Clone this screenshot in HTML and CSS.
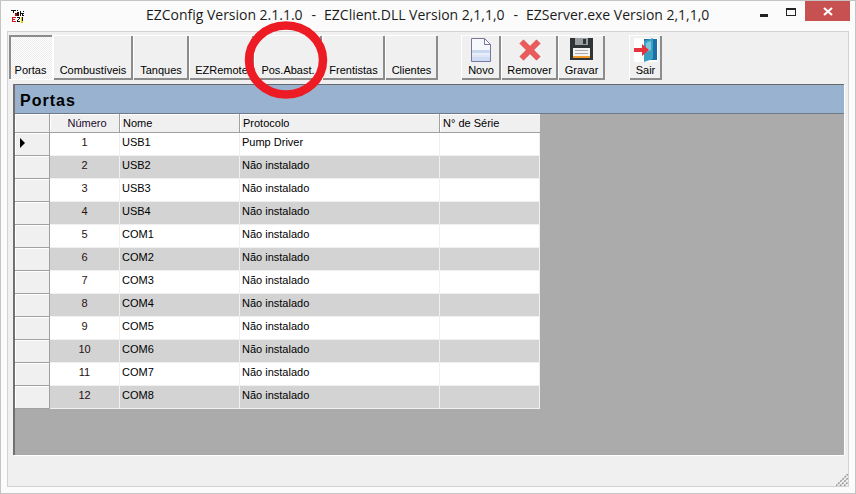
FILE: index.html
```html
<!DOCTYPE html>
<html lang="pt">
<head>
<meta charset="utf-8">
<title>EZConfig</title>
<link rel="stylesheet" href="styles.css">
</head>
<body>
<div class="window">
  <header class="titlebar">
    <svg class="app-icon" width="16" height="16" viewBox="0 0 16 16" shape-rendering="crispEdges">
      <path fill="#111" d="M1 2h5v1H4v2H3V3H1zM7 2h1v1H7zM7 4h2v4H7zM10 3h1v2h2V3h1v1h-1v1h1v1h-1v1h1v1h-2V6h-1v2h-1z"/>
      <path fill="#c00000" d="M5 5h2v3H5z"/>
      <path fill="#e01010" d="M2 9h4v1H3v1h2v1H3v1h3v1H2z"/>
      <path fill="#111" d="M7 9h3v1L8 13h2v1H7v-1l2-3H7z"/>
      <path fill="#e8d000" d="M11 9h2v6h-2z"/>
      <path fill="#111" d="M12 9h1v4h-1z"/>
    </svg>
    <h1 class="title">EZConfig Version 2.1.1.0<span class="sep">-</span>EZClient.DLL Version 2,1,1,0<span class="sep">-</span>EZServer.exe Version 2,1,1,0</h1>
    <div class="controls">
      <span class="ctl-min"></span>
      <span class="ctl-max"></span>
      <span class="ctl-close">
        <svg width="10" height="9" viewBox="0 0 10 9"><path d="M1 1l8 7M9 1L1 8" stroke="#fff" stroke-width="2.2" fill="none"/></svg>
      </span>
    </div>
  </header>

  <main class="client">
    <nav class="toolbar">
      <div class="group">
        <button class="tool tab active w-portas">Portas</button>
        <button class="tool tab w-comb">Combustíveis</button>
        <button class="tool tab w-tanq">Tanques</button>
        <button class="tool tab w-ezr">EZRemote</button>
        <button class="tool tab w-pos">Pos.Abast.</button>
        <button class="tool tab w-fren">Frentistas</button>
        <button class="tool tab w-cli">Clientes</button>
      </div>
      <div class="group actions">
        <button class="tool w-novo">
          <svg class="ico-novo" width="20" height="24" viewBox="0 0 20 24"><path d="M.5.500h13l6 6v17H.5z" fill="#dde6f6" stroke="#76769f"/><path d="M1 1h12v6h6v6H1z" fill="#f5f8fd"/><path d="M13.500.500v6h6z" fill="#fff" stroke="#76769f"/><path d="M1 12h18v3H1z" fill="#c9d8ef"/><path d="M1 15h18v2H1z" fill="#e9eff9"/><path d="M1 19h18v4H1z" fill="#d0dcf3"/></svg>
          Novo
        </button>
        <button class="tool w-rem">
          <svg class="ico-rem" width="22" height="22" viewBox="0 0 22 22"><path d="M4.500.800L11 7.300 17.500.800l3.700 3.700L14.700 11l6.500 6.500-3.700 3.700L11 14.700l-6.500 6.500-3.700-3.700L7.300 11 .8 4.500z" fill="#ec5b5b" stroke="#d84848" stroke-width=".6"/></svg>
          Remover
        </button>
        <button class="tool w-grav">
          <svg class="ico-grav" width="23" height="22" viewBox="0 0 23 22" shape-rendering="crispEdges"><path d="M0 0h22l1 1v21H0z" fill="#2f3437"/><path d="M5 0h13v7H5z" fill="#9a9ea1"/><path d="M13 1h3v5h-3z" fill="#2f3437"/><path d="M3 10h17v10H3z" fill="#f4f4f4"/><path d="M5 12h13v1H5zM5 15h13v1H5z" fill="#aaa"/><path d="M3 18h17v2H3z" fill="#f09a28"/></svg>
          Gravar
        </button>
      </div>
      <div class="group exit">
        <button class="tool w-sair">
          <svg class="ico-sair" width="24" height="24" viewBox="0 0 24 24"><path d="M0 0h24v24H0z" fill="#fff"/><path d="M10 1h13v21H10z" fill="#1a6fa8"/><path d="M10 3l9-3v21l-9 3z" fill="#3aa0c2"/><path d="M12 5l5-2v9l-5 2z" fill="#7cc7de"/><path d="M0 10h8V6l7 6-7 6v-4H0z" fill="#e8323c"/></svg>
          Sair
        </button>
      </div>
    </nav>

    <section class="panel">
      <h2 class="panel-title">Portas</h2>
      <table class="grid">
        <thead>
          <tr><th class="rh"></th><th class="c-num">Número</th><th class="c-nome">Nome</th><th class="c-prot">Protocolo</th><th class="c-ser">N° de Série</th></tr>
        </thead>
        <tbody>
          <tr><th class="rh"><span class="cursor"></span></th><td class="num">1</td><td>USB1</td><td>Pump Driver</td><td></td></tr>
          <tr><th class="rh"></th><td class="num">2</td><td>USB2</td><td>Não instalado</td><td></td></tr>
          <tr><th class="rh"></th><td class="num">3</td><td>USB3</td><td>Não instalado</td><td></td></tr>
          <tr><th class="rh"></th><td class="num">4</td><td>USB4</td><td>Não instalado</td><td></td></tr>
          <tr><th class="rh"></th><td class="num">5</td><td>COM1</td><td>Não instalado</td><td></td></tr>
          <tr><th class="rh"></th><td class="num">6</td><td>COM2</td><td>Não instalado</td><td></td></tr>
          <tr><th class="rh"></th><td class="num">7</td><td>COM3</td><td>Não instalado</td><td></td></tr>
          <tr><th class="rh"></th><td class="num">8</td><td>COM4</td><td>Não instalado</td><td></td></tr>
          <tr><th class="rh"></th><td class="num">9</td><td>COM5</td><td>Não instalado</td><td></td></tr>
          <tr><th class="rh"></th><td class="num">10</td><td>COM6</td><td>Não instalado</td><td></td></tr>
          <tr><th class="rh"></th><td class="num">11</td><td>COM7</td><td>Não instalado</td><td></td></tr>
          <tr><th class="rh"></th><td class="num">12</td><td>COM8</td><td>Não instalado</td><td></td></tr>
        </tbody>
      </table>
    </section>

    <svg class="grip" width="12" height="12" viewBox="0 0 12 12"><path d="M0 12L12 0M4 12L12 4M8 12L12 8" stroke="#9a9a9a" stroke-width="1.500" fill="none" stroke-dasharray="2 1"/></svg>
  </main>

  <svg class="annotation" width="92" height="86" viewBox="0 0 92 86"><ellipse cx="46" cy="43" rx="37" ry="34.500" fill="none" stroke="#ed1c24" stroke-width="8.500"/></svg>
</div>
</body>
</html>
```
FILE: styles.css
```css
* { box-sizing: border-box; }

html, body {
  margin: 0;
  padding: 0;
}

body {
  width: 856px;
  height: 494px;
  overflow: hidden;
  font-family: "Liberation Sans", Arial, sans-serif;
  font-size: 11px;
  color: #000;
}

.window {
  position: relative;
  width: 856px;
  height: 494px;
  display: flex;
  flex-direction: column;
  padding: 1px 6px 6px;
  background: #fbfbfb;
  border: 1px solid #c4c4c4;
}

.titlebar {
  height: 29px;
  flex: none;
  display: flex;
  align-items: flex-start;
}

.app-icon {
  flex: none;
  margin: 6px 0 0 3px;
}

.title {
  flex: 1;
  margin: 3px 0 0;
  padding-left: 120px;
  font-family: "Open Sans", sans-serif;
  font-size: 14px;
  line-height: 20px;
  font-weight: 400;
  letter-spacing: -0.015px;
  color: #1c1c1c;
  white-space: nowrap;
}

.sep {
  margin: 0 8px 0 9px;
}

.controls {
  flex: none;
  display: flex;
  margin-right: -1px;
}

.ctl-min {
  width: 8px;
  height: 3px;
  margin: 12px 18px 0 0;
  background: #222;
}

.ctl-max {
  width: 10px;
  height: 8px;
  margin: 6px 9px 0 0;
  border: 1px solid #222;
  border-top-width: 2px;
}

.ctl-close {
  width: 45px;
  height: 20px;
  margin-top: -1px;
  background: #c75050;
  display: flex;
  align-items: center;
  justify-content: center;
}

.client {
  position: relative;
  flex: 1;
  display: flex;
  flex-direction: column;
  padding: 3px 3px 31px 1px;
  background: #f0f0f0;
  border: 1px solid #d2d2d2;
}

.toolbar {
  display: flex;
  height: 44px;
  flex: none;
}

.group {
  display: flex;
  gap: 1px;
}

.actions { margin-left: 24px; }
.exit { margin-left: 25px; }

.tool {
  height: 44px;
  padding: 0 0 2px;
  display: flex;
  flex-direction: column;
  align-items: center;
  justify-content: flex-end;
  gap: 1px;
  font-family: "Liberation Sans", Arial, sans-serif;
  font-size: 11px;
  line-height: 13px;
  color: #000;
  background: #f0f0f0;
  border: 0;
  border-top: 1px solid #fff;
  border-left: 1px solid #fff;
  box-shadow: inset -1px -1px 0 #8c8c8c, 1px 1px 0 #8c8c8c;
  white-space: nowrap;
}

.tool.active {
  border: 0;
  box-shadow: inset 2px 2px 0 #8c8c8c, 1px 1px 0 #fff;
  background: repeating-conic-gradient(#fff 0 25%, #ececec 0 50%) 0 0 / 2px 2px;
}

.tool svg { flex: none; }

.ico-novo, .ico-sair { margin-bottom: 1px; }
.ico-rem { margin-bottom: 2px; }
.ico-grav { margin-bottom: 3px; }

.w-portas { width: 43px; }
.w-comb { width: 79px; }
.w-tanq { width: 55px; }
.w-ezr { width: 64px; }
.w-pos { width: 67px; }
.w-fren { width: 62px; }
.w-cli { width: 52px; }
.w-novo { width: 39px; }
.w-rem { width: 56px; }
.w-grav { width: 46px; }
.w-sair { width: 32px; }

.panel {
  flex: 1;
  margin: 5px 0 0 4px;
  width: 831px;
  background: #ababab;
  border-top: 1px solid #696969;
  border-left: 2px solid #707070;
  box-shadow: 1px 1px 0 #fff;
  overflow: hidden;
}

.panel-title {
  margin: 0;
  height: 29px;
  padding-left: 5px;
  font-size: 16px;
  line-height: 31px;
  font-weight: 700;
  letter-spacing: 1px;
  color: #000;
  background: #98b2cf;
  border-bottom: 1px solid #6d7a88;
}

.grid {
  border-collapse: separate;
  border-spacing: 0;
  table-layout: fixed;
  width: 525px;
}

.grid th, .grid td {
  padding: 0;
  font-size: 11px;
  font-weight: 400;
  line-height: 13px;
  text-align: left;
  vertical-align: top;
}

.grid .rh {
  width: 35px;
  height: 23px;
  padding: 0;
  background: #f0f0f0;
  border-right: 1px solid #a0a0a0;
  border-bottom: 1px solid #a0a0a0;
  box-shadow: inset 1px 1px 0 #fff;
}

.grid thead th,
.grid thead th.rh {
  height: 19px;
  background: #f0f0f0;
  border-right: 1px solid #a0a0a0;
  border-bottom: 1px solid #a0a0a0;
  box-shadow: inset 1px 1px 0 #fff;
}

.grid thead th:not(.rh) { padding: 3px 0 0 3px; }
.grid thead th.c-ser { border-right: 0; }
.grid thead th.c-num { text-align: center; padding-left: 5px; color: #1a0830; }

.c-num { width: 70px; }
.c-nome { width: 120px; }
.c-prot { width: 200px; }
.c-ser { width: 100px; }

.grid td {
  height: 23px;
  padding: 3px 0 0 2px;
  background: #fff;
  border-right: 1px solid #f0f0f0;
  border-bottom: 1px solid #f0f0f0;
}

.grid tbody tr:nth-child(even) td { background: #d3d3d3; }

.grid td.num {
  text-align: center;
  padding-left: 0;
  color: #2a1010;
}

.cursor {
  display: block;
  width: 0;
  height: 0;
  margin: 5px 0 0 5px;
  border-left: 5px solid #000;
  border-top: 5px solid transparent;
  border-bottom: 5px solid transparent;
}

.grip {
  position: absolute;
  right: 0;
  bottom: 0;
}

.annotation {
  position: absolute;
  left: 239px;
  top: 16px;
  pointer-events: none;
}
```
